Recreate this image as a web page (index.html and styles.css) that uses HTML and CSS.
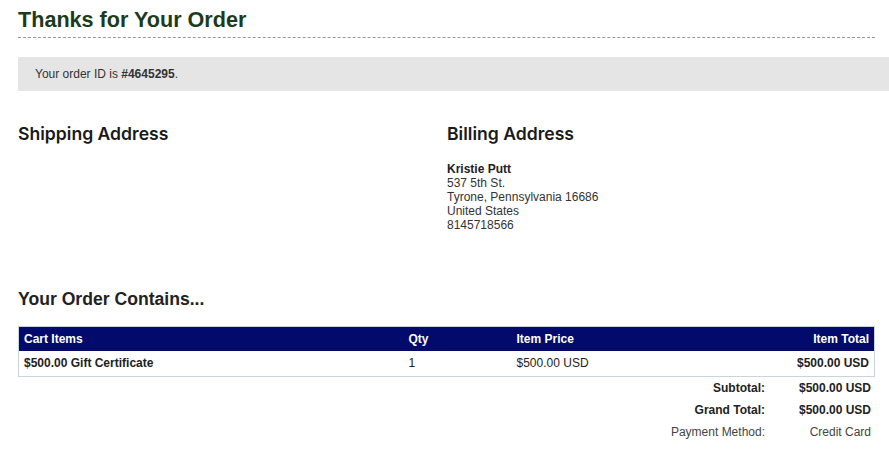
FILE: index.html
```html
<!DOCTYPE html>
<html lang="en">
<head>
  <meta charset="UTF-8" />
  <title>Thanks for Your Order</title>
  <link rel="stylesheet" href="styles.css">
</head>
<body>
  <div class="page">
    <h1>Thanks for Your Order</h1>

    <div class="order-id">Your order ID is <strong>#4645295</strong>.</div>

    <div class="addresses">
      <div class="address">
        <h2>Shipping Address</h2>
      </div>
      <div class="address">
        <h2>Billing Address</h2>
        <p>
          <strong>Kristie Putt</strong><br />
          537 5th St.<br />
          Tyrone, Pennsylvania 16686<br />
          United States<br />
          8145718566
        </p>
      </div>
    </div>

    <h3>Your Order Contains...</h3>

    <table class="cart">
      <thead>
        <tr>
          <th class="col-item">Cart Items</th>
          <th class="col-qty">Qty</th>
          <th class="col-price">Item Price</th>
          <th class="col-total">Item Total</th>
        </tr>
      </thead>
      <tbody>
        <tr>
          <td class="col-item"><strong>$500.00 Gift Certificate</strong></td>
          <td class="col-qty">1</td>
          <td class="col-price">$500.00 USD</td>
          <td class="col-total"><strong>$500.00 USD</strong></td>
        </tr>
      </tbody>
    </table>

    <table class="totals">
      <tr>
        <td class="label"><strong>Subtotal:</strong></td>
        <td class="value"><strong>$500.00 USD</strong></td>
      </tr>
      <tr>
        <td class="label"><strong>Grand Total:</strong></td>
        <td class="value"><strong>$500.00 USD</strong></td>
      </tr>
      <tr>
        <td class="label">Payment Method:</td>
        <td class="value">Credit Card</td>
      </tr>
    </table>
  </div>
</body>
</html>
```

FILE: styles.css
```css
* {
  box-sizing: border-box;
}
body {
  margin: 0;
  padding: 0 14px 0 18px;
  font-family: "Liberation Sans", Arial, sans-serif;
  font-size: 12px;
  color: #222;
  background: #fff;
}
.page {
  width: 857px;
}
h1 {
  margin: 0;
  padding: 7px 0 5px;
  font-size: 21.6px;
  line-height: 25px;
  color: #1c3b1c;
  border-bottom: 1px dashed #999;
}
.order-id {
  margin: 19px -14px 0 0;
  padding: 0 17px;
  height: 34px;
  line-height: 34px;
  background-color: #e5e5e5;
  color: #333;
}
.addresses {
  display: grid;
  grid-template-columns: 429px 1fr;
  margin-top: 31px;
  height: 165px;
}
h2 {
  margin: 0;
  font-family: Inter, "Liberation Sans", sans-serif;
  font-size: 17.6px;
  line-height: 24px;
  font-weight: 600;
  color: #1a1a1a;
}
.address p {
  margin: 16px 0 0;
  line-height: 14px;
  color: #333;
}
.address p strong {
  color: #222;
}
h3 {
  margin: 0;
  font-size: 17.6px;
  line-height: 24px;
  color: #222;
}
.cart {
  width: 100%;
  margin-top: 15px;
  border-collapse: collapse;
  border: 1px solid #c9d5da;
}
.cart th {
  height: 24px;
  padding: 0 5px;
  background-color: #020a6b;
  color: #fff;
  text-align: left;
  font-weight: bold;
}
.cart td {
  height: 26px;
  padding: 0 5px;
  color: #222;
}
.cart .col-item {
  width: 385px;
}
.cart .col-qty {
  width: 108px;
}
.cart .col-total {
  text-align: right;
}
.totals {
  margin-left: auto;
  margin-top: 0;
  border-collapse: collapse;
}
.totals td {
  height: 22px;
  padding: 0;
  color: #222;
}
.totals .label {
  text-align: right;
  padding-right: 5px;
}
.totals .value {
  width: 105px;
  text-align: right;
  padding-right: 4px;
}
.totals tr:last-child td {
  color: #444;
}
```
